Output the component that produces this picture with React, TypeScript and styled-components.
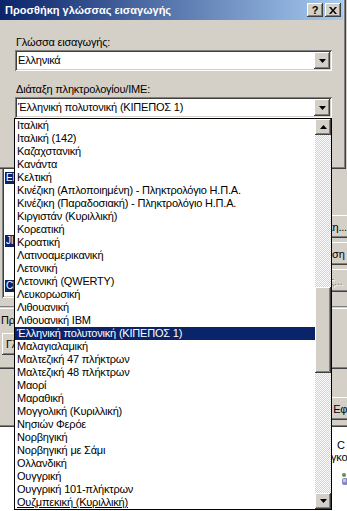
import React from "react";
import styled, { createGlobalStyle, css } from "styled-components";

const GlobalStyle = createGlobalStyle`
  html, body {
    margin: 0;
    padding: 0;
    background: #ffffff;
  }
  body {
    font-family: "Liberation Sans", Arial, sans-serif;
    font-size: 11px;
    letter-spacing: -0.2px;
    color: #000;
  }
`;

const raised = css`
  box-shadow: inset -1px -1px #404040, inset 1px 1px #ffffff,
    inset -2px -2px #808080, inset 2px 2px #d4d0c8;
`;

const sunken = css`
  box-shadow: inset 1px 1px #808080, inset -1px -1px #ffffff,
    inset 2px 2px #404040, inset -2px -2px #d4d0c8;
`;

const layouts = [
  "Ιταλική",
  "Ιταλική (142)",
  "Καζαχστανική",
  "Κανάντα",
  "Κελτική",
  "Κινέζικη (Απλοποιημένη) - Πληκτρολόγιο Η.Π.Α.",
  "Κινέζικη (Παραδοσιακή) - Πληκτρολόγιο Η.Π.Α.",
  "Κιργιστάν (Κυριλλική)",
  "Κορεατική",
  "Κροατική",
  "Λατινοαμερικανική",
  "Λετονική",
  "Λετονική (QWERTY)",
  "Λευκορωσική",
  "Λιθουανική",
  "Λιθουανική IBM",
  "Έλληνική πολυτονική (ΚΙΠΕΠΟΣ 1)",
  "Μαλαγιαλαμική",
  "Μαλτεζική 47 πλήκτρων",
  "Μαλτεζική 48 πλήκτρων",
  "Μαορί",
  "Μαραθική",
  "Μογγολική (Κυριλλική)",
  "Νησιών Φερόε",
  "Νορβηγική",
  "Νορβηγική με Σάμι",
  "Ολλανδική",
  "Ουγγρική",
  "Ουγγρική 101-πλήκτρων",
  "Ουζμπεκική (Κυριλλική)",
];

const SELECTED = 16;

export default function App() {
  return (
    <>
      <GlobalStyle />
      <Desktop>
        {/* παράθυρο ρυθμίσεων από πίσω */}
        <BackWindow>
          <ServicesRow>
            <TreeBox>
              <TreeRow $gap={30}>
                <LangIcon>EL</LangIcon>
              </TreeRow>
              <TreeRow $gap={51}>
                <LangIcon>JI</LangIcon>
              </TreeRow>
              <TreeRow $gap={33}>
                <LangIcon>CL</LangIcon>
              </TreeRow>
            </TreeBox>
            <ButtonStack>
              <PushButton>Προσθήκη...</PushButton>
              <PushButton>Κατάργηση</PushButton>
              <PushButton $disabled>Ιδιότητες...</PushButton>
            </ButtonStack>
          </ServicesRow>
          <GroupLine />
          <PrefsLabel>Πρ</PrefsLabel>
          <LangBarButton>Γλωσσική γραμμή...</LangBarButton>
          <TabBottom />
          <ActionRow>
            <PushButton>OK</PushButton>
            <PushButton>Άκυρο</PushButton>
            <PushButton>Εφαρμογή</PushButton>
          </ActionRow>
        </BackWindow>
        <LowerPane>
          <PaneText $indent={337}>C</PaneText>
          <PaneText $indent={331}>γκο</PaneText>
          <PaneIcon>
            <svg width="8" height="14" viewBox="0 0 8 14">
              <circle cx="3" cy="3" r="2" fill="#5a9a3c" />
              <rect x="1" y="6" width="6" height="7" rx="2" fill="#8a86c8" />
              <rect x="2" y="7" width="3" height="3" fill="#c6c4ea" />
            </svg>
          </PaneIcon>
        </LowerPane>

        {/* διάλογος προσθήκης γλώσσας */}
        <Dialog>
          <TitleBar>
            <TitleText>Προσθήκη γλώσσας εισαγωγής</TitleText>
            <TitleButtons>
              <CaptionButton>?</CaptionButton>
              <CaptionButton>
                <svg width="8" height="7" viewBox="0 0 8 7">
                  <path d="M0 0h2l2 2.5L6 0h2L5 3.5 8 7H6L4 4.5 2 7H0l3-3.5z" fill="#000" />
                </svg>
              </CaptionButton>
            </TitleButtons>
          </TitleBar>
          <DialogBody>
            <FieldLabel>Γλώσσα εισαγωγής:</FieldLabel>
            <ComboBox>
              <ComboText>Ελληνικά</ComboText>
              <ArrowButton>
                <Arrow />
              </ArrowButton>
            </ComboBox>
            <FieldLabel $top={12}>Διάταξη πληκτρολογίου/IME:</FieldLabel>
            <ComboBox>
              <ComboText>Έλληνική πολυτονική (ΚΙΠΕΠΟΣ 1)</ComboText>
              <ArrowButton>
                <Arrow />
              </ArrowButton>
            </ComboBox>
          </DialogBody>
        </Dialog>

        <DropList>
          <Items>
            {layouts.map((name, i) => (
              <Item key={name} $selected={i === SELECTED} $underline={i === layouts.length - 1}>
                {name}
              </Item>
            ))}
          </Items>
          <ScrollBar>
            <ScrollButton>
              <Arrow $up />
            </ScrollButton>
            <Track>
              <Thumb />
            </Track>
            <ScrollButton>
              <Arrow />
            </ScrollButton>
          </ScrollBar>
        </DropList>
      </Desktop>
    </>
  );
}

function Arrow({ $up }: { $up?: boolean }) {
  return (
    <svg width="7" height="4" viewBox="0 0 7 4">
      <polygon points={$up ? "3.5,0 7,4 0,4" : "0,0 7,0 3.5,4"} fill="#000" />
    </svg>
  );
}

const Desktop = styled.div`
  position: relative;
  width: 347px;
  height: 511px;
  overflow: hidden;
  background: #ffffff;
  display: flex;
  flex-direction: column;
`;

const BackWindow = styled.div`
  flex: none;
  height: 427px;
  background: #d4d0c8;
  box-shadow: inset 0 -1px #404040, inset 0 -2px #808080;
  overflow: hidden;
  display: flex;
  flex-direction: column;
`;

const ServicesRow = styled.div`
  display: grid;
  grid-template-columns: 276px 76px;
  column-gap: 2px;
  padding: 140px 0 0 2px;
`;

const TreeBox = styled.div`
  height: 158px;
  box-sizing: border-box;
  padding: 2px 0 0 3px;
  background: #ffffff;
  ${sunken};
  display: flex;
  flex-direction: column;
`;

const TreeRow = styled.div<{ $gap: number }>`
  margin-top: ${(p) => p.$gap}px;
  height: 12px;
  display: flex;
`;

const LangIcon = styled.span`
  width: 14px;
  height: 12px;
  background: #0a246a;
  color: #fff;
  font-size: 10px;
  line-height: 12px;
  padding-left: 1px;
`;

const ButtonStack = styled.div`
  margin-top: 75px;
  display: flex;
  flex-direction: column;
  gap: 4px;
`;

const PushButton = styled.div<{ $disabled?: boolean }>`
  width: 76px;
  height: 23px;
  flex: none;
  box-sizing: border-box;
  display: flex;
  align-items: center;
  justify-content: center;
  white-space: nowrap;
  background: #d4d0c8;
  ${raised};
  color: ${(p) => (p.$disabled ? "#808080" : "#000")};
  text-shadow: ${(p) => (p.$disabled ? "1px 1px #fff" : "none")};
`;

const GroupLine = styled.div`
  margin-top: 8px;
  height: 1px;
  border-top: 1px solid #808080;
  border-bottom: 1px solid #fff;
`;

const PrefsLabel = styled.div`
  margin: 5px 0 0 1px;
  line-height: 13px;
`;

const LangBarButton = styled(PushButton)`
  width: 150px;
  height: 22px;
  margin: 6px 0 0 2px;
  justify-content: flex-start;
  padding-left: 4px;
`;

const TabBottom = styled.div`
  margin-top: 12px;
  height: 0;
  border-top: 1px solid #808080;
  border-bottom: 1px solid #404040;
`;

const ActionRow = styled.div`
  margin-top: 28px;
  display: flex;
  gap: 4px;
  padding-left: 160px;
`;

const LowerPane = styled.div`
  flex: 1;
  background: #ffffff;
  padding-top: 12px;
  display: flex;
  flex-direction: column;
`;

const PaneText = styled.div<{ $indent: number }>`
  padding-left: ${(p) => p.$indent}px;
  line-height: 12px;
  white-space: nowrap;
`;

const PaneIcon = styled.div`
  margin: 9px 0 0 341px;
`;

const Dialog = styled.div`
  position: absolute;
  left: 0;
  top: 0;
  width: 346px;
  height: 169px;
  background: #d4d0c8;
  box-shadow: inset -1px -1px #404040, inset -2px -2px #808080;
`;

const TitleBar = styled.div`
  height: 20px;
  margin-right: 3px;
  padding: 0 2px 0 5px;
  display: flex;
  align-items: center;
  justify-content: space-between;
  background: linear-gradient(to right, #0a246a, #a6caf0);
`;

const TitleText = styled.span`
  color: #fff;
  font-weight: bold;
  font-size: 11px;
  letter-spacing: 0;
  white-space: nowrap;
`;

const TitleButtons = styled.div`
  display: flex;
  gap: 2px;
`;

const CaptionButton = styled.div`
  width: 16px;
  height: 14px;
  box-sizing: border-box;
  display: flex;
  align-items: center;
  justify-content: center;
  background: #d4d0c8;
  ${raised};
  font-weight: bold;
  font-size: 11px;
  line-height: 14px;
`;

const DialogBody = styled.div`
  padding: 16px 0 0 15px;
  display: flex;
  flex-direction: column;
`;

const FieldLabel = styled.div<{ $top?: number }>`
  margin-top: ${(p) => p.$top ?? 0}px;
  padding-left: 1px;
  height: 13px;
  line-height: 13px;
  margin-bottom: 1px;
`;

const ComboBox = styled.div`
  width: 317px;
  height: 21px;
  box-sizing: border-box;
  padding: 2px;
  display: flex;
  align-items: stretch;
  background: #ffffff;
  ${sunken};
`;

const ComboText = styled.div`
  flex: 1;
  padding-left: 1px;
  line-height: 17px;
  white-space: nowrap;
`;

const ArrowButton = styled.div`
  width: 16px;
  height: 17px;
  flex: none;
  box-sizing: border-box;
  display: flex;
  align-items: center;
  justify-content: center;
  background: #d4d0c8;
  ${raised};
`;

const ScrollButton = styled(ArrowButton)`
  height: 16px;
`;

const DropList = styled.div`
  position: absolute;
  left: 14px;
  top: 118px;
  width: 318px;
  box-sizing: border-box;
  border: 1px solid #000;
  background: #ffffff;
  display: flex;
`;

const Items = styled.div`
  flex: 1;
  display: flex;
  flex-direction: column;
`;

const Item = styled.div<{ $selected?: boolean; $underline?: boolean }>`
  height: 13px;
  line-height: 13px;
  padding-left: 2px;
  white-space: nowrap;
  background: ${(p) => (p.$selected ? "#0a246a" : "transparent")};
  color: ${(p) => (p.$selected ? "#fff" : "#000")};
  text-decoration: ${(p) => (p.$underline ? "underline" : "none")};
`;

const ScrollBar = styled.div`
  width: 16px;
  display: flex;
  flex-direction: column;
`;

const Track = styled.div`
  flex: 1;
  padding-top: 152px;
  background: repeating-conic-gradient(#d4d0c8 0 25%, #ffffff 0 50%) 0 0 / 2px 2px;
`;

const Thumb = styled.div`
  height: 86px;
  background: #d4d0c8;
  ${raised};
`;
